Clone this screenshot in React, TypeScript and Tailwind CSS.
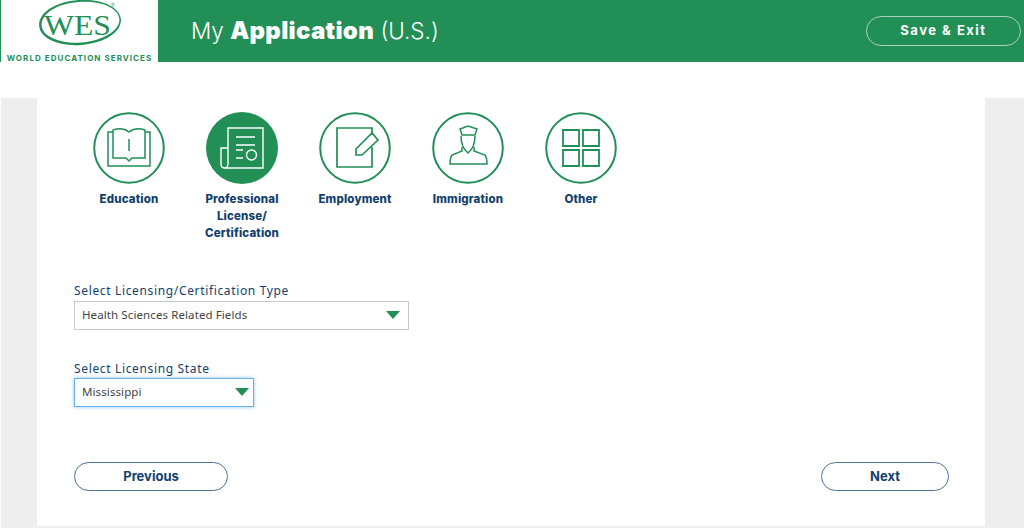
import React from 'react';

const GREEN = '#218f56';

const steps = [
  {
    label: ['Education'],
    icon: (
      <g fill="none" strokeWidth="1.5">
        <path d="M-16 -16H-21V18H21V-16H16" />
        <path d="M-16 -18C-10 -20 -4 -19 0 -16C4 -19 10 -20 16 -18V10H3L0 13L-3 10H-16Z" />
        <path d="M0 -9V3" />
      </g>
    ),
  },
  {
    label: ['Professional', 'License/', 'Certification'],
    active: true,
    icon: (
      <g fill="none" strokeWidth="1.4">
        <path d="M-14 15V-20H21V20H-17C-19.500 20 -21 18.500 -21 16V0H-14" />
        <path d="M-14 15C-14 18 -15 20 -17 20" />
        <path d="M-6 -11H13M-6 -3H13M-6 2H1M-6 10H1" />
        <circle cx="9.500" cy="7" r="5" />
      </g>
    ),
  },
  {
    label: ['Employment'],
    icon: (
      <g fill="none" strokeWidth="1.7">
        <path d="M17 -13V-20H-18V19H17V-1" />
        <path d="M1 1L17 -15L23 -8L7 7L1 7Z" />
      </g>
    ),
  },
  {
    label: ['Immigration'],
    icon: (
      <g fill="none" strokeWidth="1.5">
        <path d="M-8 -19L0 -22L9 -19L7 -13H-6Z" />
        <path d="M-7 -12C-7 -4 -5 1 0 5C5 1 7 -4 7 -12" />
        <path d="M-6 -1L-6 3L-16 7C-18 10 -18 13 -18 16H19C19 13 19 10 17 7L6 3L6 -1" />
      </g>
    ),
  },
  {
    label: ['Other'],
    icon: (
      <g fill="none" strokeWidth="1.8">
        <path d="M-18 -18H-2V-2H-18ZM2 -18H18V-2H2ZM-18 2H-2V18H-18ZM2 2H18V18H2Z" />
      </g>
    ),
  },
];

function Caret() {
  return (
    <svg width="14" height="8" viewBox="0 0 14 8" className="shrink-0">
      <path d="M0 0H14L7 8Z" fill={GREEN} />
    </svg>
  );
}

function Logo() {
  return (
    <svg width="157" height="46" viewBox="0 0 157 46" className="shrink-0">
      <g transform="rotate(-4 79 22)">
        <path
          fillRule="evenodd"
          fill={GREEN}
          d="M38 23C38 10 56 0 79 0C102 0 120 10 120 22C120 35 102 45 79 45C56 45 38 36 38 23ZM40.500 23C40.500 34 58 42.500 79 42.500C100 42.500 118.500 33 118.500 22C118.500 11 102 2 79 2C56 2 40.500 12 40.500 23Z"
        />
      </g>
      <text x="43" y="35" textLength="67" lengthAdjust="spacingAndGlyphs" fontFamily="'Liberation Serif', serif" fontSize="30" fill={GREEN}>
        WES
      </text>
      <text x="110" y="7" fontFamily="'Liberation Sans', sans-serif" fontSize="5" fill={GREEN}>
        ®
      </text>
    </svg>
  );
}

export default function App() {
  return (
    <div className="h-[528px] w-full overflow-hidden bg-white font-['Lato',sans-serif]">
      <header className="flex h-[62px] items-center bg-[#218f56]">
        <div className="flex h-full w-[158px] flex-col items-center border-l border-[#218f56] bg-white">
          <Logo />
          <span className="mt-[7px] whitespace-nowrap font-['Inter',sans-serif] text-[8px] leading-[10px] font-bold tracking-[1.05px] text-[#218f56]">WORLD EDUCATION SERVICES</span>
        </div>
        <h1 className="ml-[33px] font-['Inter',sans-serif] text-[22.5px] font-light text-white">
          My <span className="text-[24px] font-black tracking-[0.3px]">Application</span> (U.S.)
        </h1>
        <button className="mr-[3px] ml-auto h-[30px] w-[155px] rounded-full border-[1.5px] border-[#a5d3bb] font-['Inter',sans-serif] text-[13px] font-bold tracking-[1.5px] text-white">
          Save &amp; Exit
        </button>
      </header>

      <main className="mt-[36px] ml-px h-[430px] bg-[#eeeeee] pr-[39px] pb-[2px] pl-[36px]">
        <div className="h-full bg-white pt-[14px] pr-[36px] pl-[37px]">
          <div className="flex">
            {steps.map((step) => (
              <div key={step.label[0]} className="flex w-[113px] flex-col items-center first:ml-[-1.5px]">
                <svg width="72" height="72" viewBox="-36 -36 72 72">
                  <circle cx="0" cy="0" r={step.active ? 36 : 34.800} fill={step.active ? GREEN : 'white'} stroke={GREEN} strokeWidth={step.active ? 0 : 2} />
                  <g stroke={step.active ? 'white' : GREEN}>{step.icon}</g>
                </svg>
                <div className="mt-[7px] text-center font-['Inter',sans-serif] text-[11.5px] leading-[17px] font-extrabold tracking-[0.15px] text-[#123f6d]">
                  {step.label.map((line) => (
                    <div key={line}>{line}</div>
                  ))}
                </div>
              </div>
            ))}
          </div>

          <label className="mt-[41px] block font-['Noto_Sans',sans-serif] text-[12px] leading-[16px] tracking-[0.65px] text-[#123f6d]">
            Select Licensing/Certification Type
          </label>
          <div className="mt-[2px] flex h-[29px] w-[335px] items-center justify-between border border-[#c8c8c8] pr-[8px] pb-[1px] pl-[7px] font-['Noto_Sans',sans-serif] text-[11.5px] tracking-[0.1px] text-[#444444]">
            <span>Health Sciences Related Fields</span>
            <Caret />
          </div>

          <label className="mt-[31px] block font-['Noto_Sans',sans-serif] text-[12px] leading-[16px] tracking-[0.65px] text-[#123f6d]">
            Select Licensing State
          </label>
          <div className="mt-[1px] flex h-[29px] w-[180px] items-center justify-between border border-[#66afe9] pr-[4px] pb-[1px] pl-[7px] font-['Noto_Sans',sans-serif] text-[11.5px] tracking-[0.1px] text-[#444444] shadow-[0_0_4px_rgba(102,175,233,0.7)]">
            <span>Mississippi</span>
            <Caret />
          </div>

          <div className="mt-[55px] flex justify-between">
            <button className="h-[29px] w-[154px] rounded-full border border-[#49739b] font-['Inter',sans-serif] text-[13px] font-bold text-[#123f6d]">
              Previous
            </button>
            <button className="h-[29px] w-[128px] rounded-full border border-[#49739b] font-['Inter',sans-serif] text-[13px] font-bold text-[#123f6d]">
              Next
            </button>
          </div>
        </div>
      </main>
    </div>
  );
}
